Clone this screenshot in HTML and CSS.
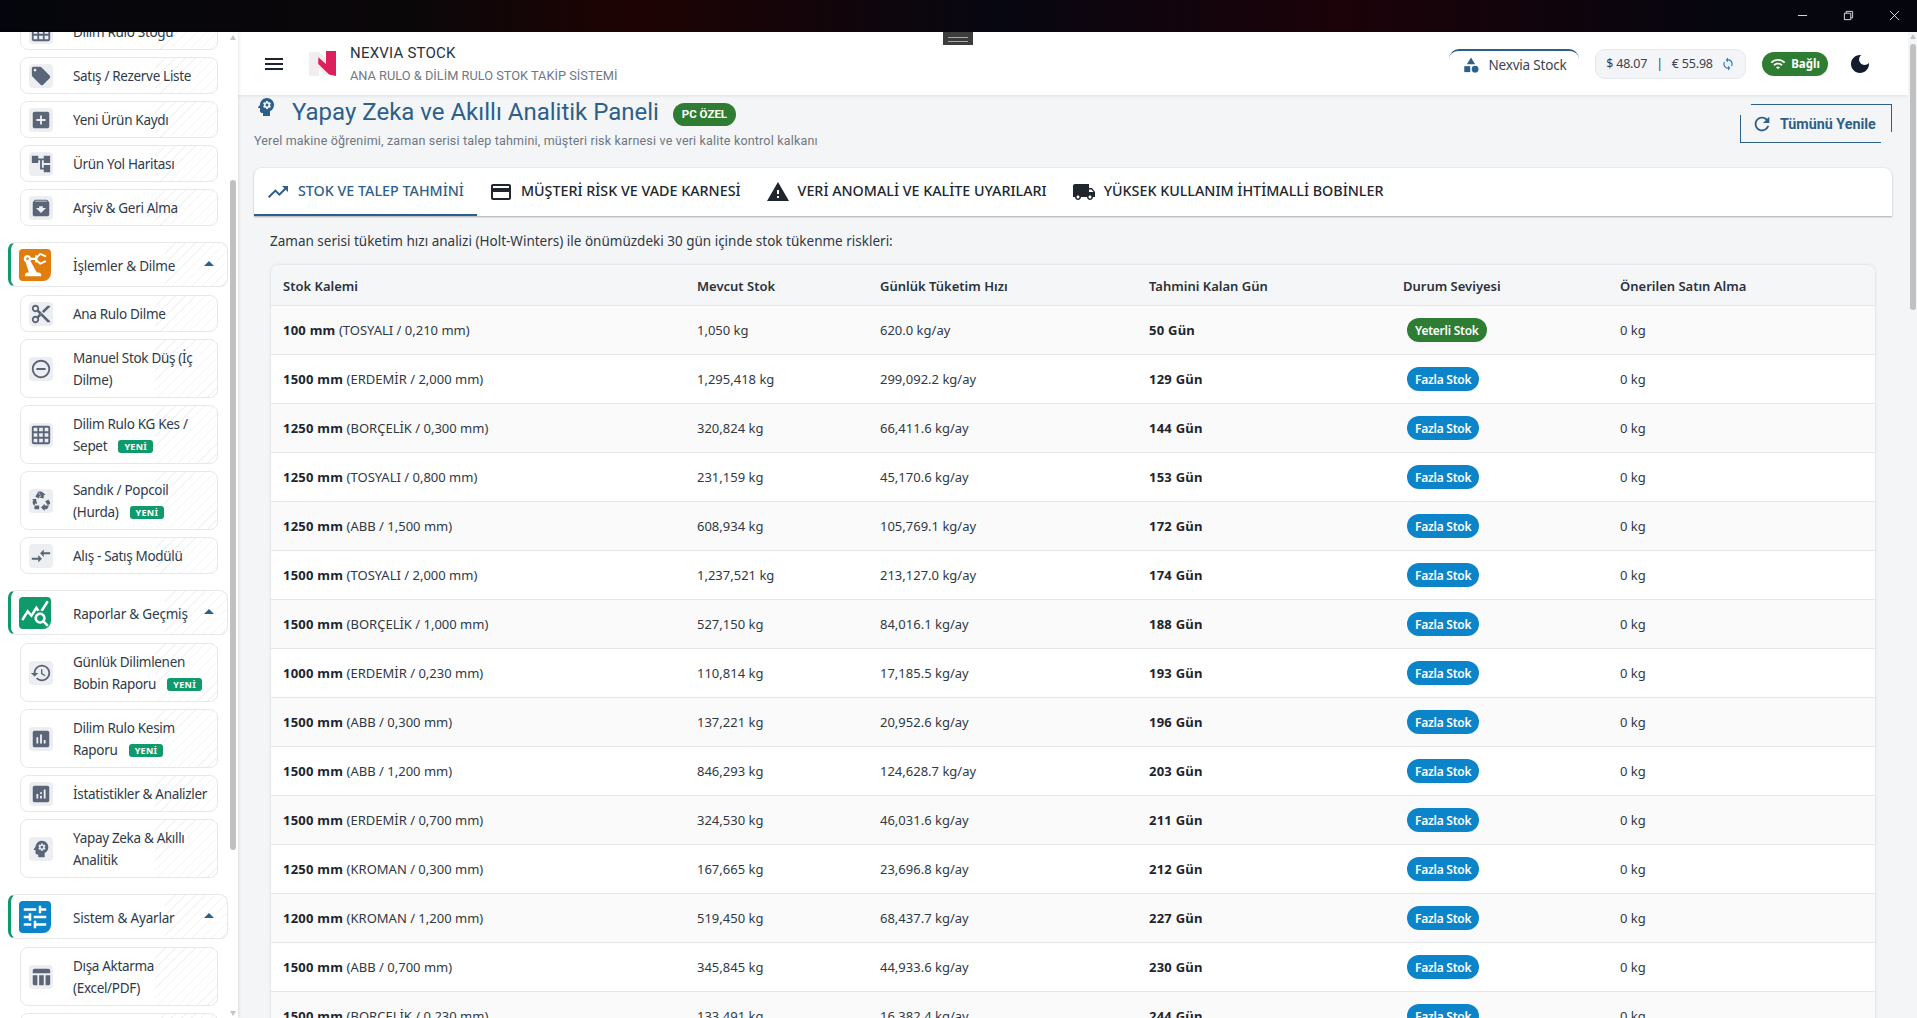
FILE: index.html
```html
<!DOCTYPE html>
<html lang="tr">
<head>
    <meta charset="UTF-8">
    <meta name="viewport" content="width=device-width, initial-scale=1.0">
    <title>Nexvia Stock</title>
    <link rel="stylesheet" href="styles.css">
</head>
<body>
    <svg class="sprite" xmlns="http://www.w3.org/2000/svg">
        <symbol id="i-grid" viewBox="0 0 24 24"><path d="M20 2H4c-1.1 0-2 .9-2 2v16c0 1.1.9 2 2 2h16c1.1 0 2-.9 2-2V4c0-1.1-.9-2-2-2zM8 20H4v-4h4v4zm0-6H4v-4h4v4zm0-6H4V4h4v4zm6 12h-4v-4h4v4zm0-6h-4v-4h4v4zm0-6h-4V4h4v4zm6 12h-4v-4h4v4zm0-6h-4v-4h4v4zm0-6h-4V4h4v4z"/></symbol>
        <symbol id="i-tag" viewBox="0 0 24 24"><path d="M21.41 11.58l-9-9C12.05 2.22 11.55 2 11 2H4c-1.1 0-2 .9-2 2v7c0 .55.22 1.05.59 1.42l9 9c.36.36.86.58 1.41.58.55 0 1.05-.22 1.41-.59l7-7c.37-.36.59-.86.59-1.41 0-.55-.23-1.06-.59-1.42zM5.5 7C4.67 7 4 6.33 4 5.5S4.67 4 5.5 4 7 4.67 7 5.5 6.33 7 5.5 7z"/></symbol>
        <symbol id="i-add" viewBox="0 0 24 24"><path d="M19 3H5c-1.11 0-2 .9-2 2v14c0 1.1.89 2 2 2h14c1.1 0 2-.9 2-2V5c0-1.1-.9-2-2-2zm-2 10h-4v4h-2v-4H7v-2h4V7h2v4h4v2z"/></symbol>
        <symbol id="i-tree" viewBox="0 0 24 24"><path d="M22 11V3h-7v3H9V3H2v8h7V8h2v10h4v3h7v-8h-7v3h-2V8h2v3z"/></symbol>
        <symbol id="i-archive" viewBox="0 0 24 24"><path d="M20.54 5.23l-1.39-1.68C18.88 3.21 18.47 3 18 3H6c-.47 0-.88.21-1.16.55L3.46 5.23C3.17 5.57 3 6.02 3 6.5V19c0 1.1.9 2 2 2h14c1.1 0 2-.9 2-2V6.5c0-.48-.17-.93-.46-1.27zM12 17.5L6.5 12H10v-2h4v2h3.5L12 17.5zM5.12 5l.81-1h12l.94 1H5.12z"/></symbol>
        <symbol id="i-cut" viewBox="0 0 24 24"><path d="M9.64 7.64c.23-.5.36-1.05.36-1.64 0-2.21-1.79-4-4-4S2 3.79 2 6s1.79 4 4 4c.59 0 1.14-.13 1.64-.36L10 12l-2.36 2.36C7.14 14.13 6.59 14 6 14c-2.21 0-4 1.79-4 4s1.79 4 4 4 4-1.79 4-4c0-.59-.13-1.14-.36-1.64L12 14l7 7h3v-1L9.64 7.64zM6 8c-1.1 0-2-.89-2-2s.9-2 2-2 2 .89 2 2-.9 2-2 2zm0 12c-1.1 0-2-.89-2-2s.9-2 2-2 2 .89 2 2-.9 2-2 2zm6-7.5c-.28 0-.5-.22-.5-.5s.22-.5.5-.5.5.22.5.5-.22.5-.5.5zM19 3l-6 6 2 2 7-7V3z"/></symbol>
        <symbol id="i-minus" viewBox="0 0 24 24"><path d="M7 11v2h10v-2H7zm5-9C6.48 2 2 6.48 2 12s4.48 10 10 10 10-4.48 10-10S17.52 2 12 2zm0 18c-4.41 0-8-3.59-8-8s3.59-8 8-8 8 3.59 8 8-3.59 8-8 8z"/></symbol>
        <symbol id="i-recycle" viewBox="0 0 24 24"><path d="M5.77 7.15 7.2 4.78l1.03-1.71c.39-.65 1.33-.65 1.72 0l1.48 2.46-1.23 2.06-1 1.62-3.43-2.06zm15.95 5.82-1.6-2.66-3.46 2L18.87 16H20c.76 0 1.45-.43 1.79-1.11.14-.28.21-.58.21-.89 0-.36-.1-.71-.28-1.03zM16 21h1.5c.76 0 1.45-.43 1.79-1.11L20.74 17H16v-2l-4 4 4 4v-2zm-6-4H5.7l-.84 1.41c-.3.5-.32 1.12-.06 1.65.28.57.87.94 1.52.94H10v-4zm-3.88-2.65 1.73 1.04L6.48 9.5 2 10.37l1.73 1.04-.67 1.12c-.33.55-.35 1.24-.07 1.82l1.5 3.1 1.63-3.08zm10.9-9.21L13.6 2.48C13.24 1.87 12.57 1.5 11.86 1.5H8.5l3.32 5.52L10.1 8.06l4.47 1.11 1.09-4.49-1.64.99.01-.01z"/></symbol>
        <symbol id="i-swap" viewBox="0 0 24 24"><path d="M9.01 14H2v2h7.01v3L13 15l-3.99-4v3zm5.98-1v-3H22V8h-7.01V5L11 9l3.99 4z"/></symbol>
        <symbol id="i-history" viewBox="0 0 24 24"><path d="M13 3c-4.97 0-9 4.03-9 9H1l3.89 3.89.07.14L9 12H6c0-3.87 3.13-7 7-7s7 3.13 7 7-3.13 7-7 7c-1.93 0-3.68-.79-4.94-2.06l-1.42 1.42C8.27 19.99 10.51 21 13 21c4.97 0 9-4.03 9-9s-4.03-9-9-9zm-1 5v5l4.28 2.54.72-1.21-3.5-2.08V8H12z"/></symbol>
        <symbol id="i-poll" viewBox="0 0 24 24"><path d="M19 3H5c-1.1 0-2 .9-2 2v14c0 1.1.9 2 2 2h14c1.1 0 2-.9 2-2V5c0-1.1-.9-2-2-2zM9 17H7v-7h2v7zm4 0h-2V7h2v10zm4 0h-2v-4h2v4z"/></symbol>
        <symbol id="i-analytics" viewBox="0 0 24 24"><path d="M19 3H5c-1.1 0-2 .9-2 2v14c0 1.1.9 2 2 2h14c1.1 0 2-.9 2-2V5c0-1.1-.9-2-2-2zM9 17H7v-5h2v5zm4 0h-2v-3h2v3zm0-5h-2v-2h2v2zm4 5h-2V7h2v10z"/></symbol>
        <symbol id="i-brain" viewBox="0 0 24 24"><path d="M13 8.57c-.79 0-1.43.64-1.43 1.43s.64 1.43 1.43 1.43 1.43-.64 1.43-1.43-.64-1.43-1.43-1.43z"/><path d="M13 3C9.25 3 6.2 5.94 6.02 9.64L4.1 12.2c-.25.33-.01.8.4.8H6v3c0 1.1.9 2 2 2h1v3h7v-4.68c2.36-1.12 4-3.53 4-6.32 0-3.87-3.13-7-7-7zm3 7c0 .13-.01.26-.02.39l.83.66c.08.06.1.16.05.25l-.8 1.39c-.05.09-.16.12-.24.09l-.99-.4c-.21.16-.43.29-.67.39L14 13.83c-.01.1-.1.17-.2.17h-1.6c-.1 0-.18-.07-.2-.17l-.15-1.06c-.25-.1-.47-.23-.68-.39l-.99.4c-.09.03-.2 0-.25-.09l-.8-1.39c-.05-.08-.03-.19.05-.25l.84-.66c-.01-.13-.02-.26-.02-.39s.02-.27.04-.39l-.85-.66c-.08-.06-.1-.16-.05-.26l.8-1.38c.05-.09.15-.12.24-.09l1 .4c.2-.15.43-.29.67-.39L12 6.17c.02-.1.1-.17.2-.17h1.6c.1 0 .18.07.2.17l.15 1.06c.24.1.46.23.67.39l1-.4c.09-.03.2 0 .24.09l.8 1.38c.05.09.03.2-.05.26l-.85.66c.03.12.04.25.04.39z"/></symbol>
        <symbol id="i-table" viewBox="0 0 24 24"><path d="M10 10.02h5V21h-5zM17 21h3c1.1 0 2-.9 2-2v-9h-5v11zm3-18H5c-1.1 0-2 .9-2 2v3h19V5c0-1.1-.9-2-2-2zM3 19c0 1.1.9 2 2 2h3V10H3v9z"/></symbol>
        <symbol id="i-robot" viewBox="0 0 24 24"><path d="M19.93 8.35l-3.6 1.68L14 7.7V6.3l2.33-2.33 3.6 1.68c.38.18.82.01 1-.36.18-.38.01-.82-.36-1L16.65 2.6c-.38-.18-.83-.1-1.13.2l-1.74 1.74c-.18-.18-.43-.29-.71-.29-.55 0-1 .45-1 1v1H8.82C8.34 4.65 7.26 4 6 4 4.34 4 3 5.34 3 7c0 1.1.6 2.05 1.48 2.58L7.08 18H6c-1.1 0-2 .9-2 2v1h13v-1c0-1.1-.9-2-2-2h-1.62L8.41 8.77c.17-.24.31-.49.41-.77H12v1c0 .55.45 1 1 1 .28 0 .53-.11.71-.29l1.74 1.74c.3.3.75.38 1.13.2l3.92-1.83c.38-.18.54-.62.36-1-.18-.37-.62-.54-.93-.47zM6 8c-.55 0-1-.45-1-1s.45-1 1-1 1 .45 1 1-.45 1-1 1z"/></symbol>
        <symbol id="i-query" viewBox="0 0 24 24"><path d="M19.88 18.47c.44-.7.7-1.51.7-2.39 0-2.49-2.01-4.5-4.5-4.5s-4.5 2.01-4.5 4.5 2.01 4.5 4.49 4.5c.88 0 1.7-.26 2.39-.7L21.58 23 23 21.58l-3.12-3.11zm-3.8.11c-1.38 0-2.5-1.12-2.5-2.5s1.12-2.5 2.5-2.5 2.5 1.12 2.5 2.5-1.12 2.5-2.5 2.5zm-.36-8.5c-.74.02-1.45.18-2.1.45l-.55-.83-3.8 6.18-3.01-3.52-3.63 5.81L1 17l5-8 3 3.5L13 6l2.72 4.08zm2.59.5c-.64-.28-1.33-.45-2.05-.49L21.38 2 23 3.18l-4.69 7.4z"/></symbol>
        <symbol id="i-tune" viewBox="0 0 24 24"><path d="M3 17v2h6v-2H3zM3 5v2h10V5H3zm10 16v-2h8v-2h-8v-2h-2v6h2zM7 9v2H3v2h4v2h2V9H7zm14 4v-2H11v2h10zm-6-4h2V7h4V5h-4V3h-2v6z"/></symbol>
        <symbol id="i-trend" viewBox="0 0 24 24"><path d="M16 6l2.29 2.29-4.88 4.88-4-4L2 16.59 3.41 18l6-6 4 4 6.3-6.29L22 12V6z"/></symbol>
        <symbol id="i-card" viewBox="0 0 24 24"><path d="M20 4H4c-1.11 0-1.99.89-1.99 2L2 18c0 1.11.89 2 2 2h16c1.11 0 2-.89 2-2V6c0-1.11-.89-2-2-2zm0 14H4v-6h16v6zm0-10H4V6h16v2z"/></symbol>
        <symbol id="i-warn" viewBox="0 0 24 24"><path d="M1 21h22L12 2 1 21zm12-3h-2v-2h2v2zm0-4h-2v-4h2v4z"/></symbol>
        <symbol id="i-truck" viewBox="0 0 24 24"><path d="M20 8h-3V4H3c-1.1 0-2 .9-2 2v11h2c0 1.66 1.34 3 3 3s3-1.34 3-3h6c0 1.66 1.34 3 3 3s3-1.34 3-3h2v-5l-3-4zM6 18.5c-.83 0-1.5-.67-1.5-1.5s.67-1.5 1.5-1.5 1.5.67 1.5 1.5-.67 1.5-1.5 1.5zm13.5-9l1.96 2.5H17V9.5h2.5zm-1.5 9c-.83 0-1.5-.67-1.5-1.5s.67-1.5 1.5-1.5 1.5.67 1.5 1.5-.67 1.5-1.5 1.5z"/></symbol>
        <symbol id="i-menu" viewBox="0 0 24 24"><path d="M3 18h18v-2H3v2zm0-5h18v-2H3v2zm0-7v2h18V6H3z"/></symbol>
        <symbol id="i-category" viewBox="0 0 24 24"><path d="M12 2l-5.500 9h11z"/><circle cx="17.500" cy="17.500" r="4.500"/><path d="M3 13.500h8v8H3z"/></symbol>
        <symbol id="i-sync" viewBox="0 0 24 24"><path d="M12 4V1L8 5l4 4V6c3.31 0 6 2.69 6 6 0 1.01-.25 1.97-.7 2.8l1.46 1.46C19.54 15.03 20 13.57 20 12c0-4.42-3.58-8-8-8zm0 14c-3.31 0-6-2.69-6-6 0-1.01.25-1.97.7-2.8L5.24 7.74C4.46 8.97 4 10.43 4 12c0 4.42 3.58 8 8 8v3l4-4-4-4v3z"/></symbol>
        <symbol id="i-wifi" viewBox="0 0 24 24"><path d="M1 9l2 2c4.97-4.97 13.03-4.97 18 0l2-2C16.93 2.93 7.08 2.93 1 9zm8 8l3 3 3-3c-1.65-1.66-4.34-1.66-6 0zm-4-4l2 2c2.76-2.76 7.24-2.76 10 0l2-2C15.14 9.14 8.87 9.14 5 13z"/></symbol>
        <symbol id="i-moon" viewBox="0 0 24 24"><path d="M12 3c-4.97 0-9 4.03-9 9s4.03 9 9 9 9-4.03 9-9c0-.46-.04-.92-.1-1.36-.98 1.37-2.58 2.26-4.4 2.26-2.98 0-5.4-2.42-5.4-5.4 0-1.81.89-3.42 2.26-4.4-.44-.06-.9-.1-1.36-.1z"/></symbol>
        <symbol id="i-refresh" viewBox="0 0 24 24"><path d="M17.65 6.35C16.2 4.9 14.21 4 12 4c-4.42 0-7.99 3.58-7.99 8s3.57 8 7.99 8c3.73 0 6.84-2.55 7.73-6h-2.08c-.82 2.33-3.04 4-5.65 4-3.31 0-6-2.69-6-6s2.69-6 6-6c1.66 0 3.14.69 4.22 1.78L13 11h7V4l-2.35 2.35z"/></symbol>
    </svg>

    <div class="titlebar">
        <div class="grip"></div>
        <div class="win-controls">
            <svg class="win-btn" viewBox="0 0 12 12"><path d="M1 6h10"/></svg>
            <svg class="win-btn" viewBox="0 0 12 12"><path d="M1.500 3.500h7v7h-7zM3.500 3.500V1.500h7v7h-2"/></svg>
            <svg class="win-btn" viewBox="0 0 12 12"><path d="M1 1l10 10M11 1L1 11"/></svg>
        </div>
    </div>

    <div class="app">
        <aside class="sidebar">
            <nav class="side-list">
                <a class="side-card"><span class="side-icon"><svg><use href="#i-grid"/></svg></span><span class="side-text">Dilim Rulo Stoğu</span></a>
                <a class="side-card"><span class="side-icon"><svg><use href="#i-tag"/></svg></span><span class="side-text">Satış / Rezerve Liste</span></a>
                <a class="side-card"><span class="side-icon"><svg><use href="#i-add"/></svg></span><span class="side-text">Yeni Ürün Kaydı</span></a>
                <a class="side-card"><span class="side-icon"><svg><use href="#i-tree"/></svg></span><span class="side-text">Ürün Yol Haritası</span></a>
                <a class="side-card"><span class="side-icon"><svg><use href="#i-archive"/></svg></span><span class="side-text">Arşiv &amp; Geri Alma</span></a>

                <a class="side-head"><span class="head-icon orange"><svg><use href="#i-robot"/></svg></span><span class="head-text">İşlemler &amp; Dilme</span><i class="caret"></i></a>
                <a class="side-card"><span class="side-icon"><svg><use href="#i-cut"/></svg></span><span class="side-text">Ana Rulo Dilme</span></a>
                <a class="side-card"><span class="side-icon"><svg><use href="#i-minus"/></svg></span><span class="side-text">Manuel Stok Düş (İç Dilme)</span></a>
                <a class="side-card"><span class="side-icon"><svg><use href="#i-grid"/></svg></span><span class="side-text">Dilim Rulo KG Kes / Sepet <b class="new">YENİ</b></span></a>
                <a class="side-card"><span class="side-icon"><svg><use href="#i-recycle"/></svg></span><span class="side-text">Sandık / Popcoil (Hurda) <b class="new">YENİ</b></span></a>
                <a class="side-card"><span class="side-icon"><svg><use href="#i-swap"/></svg></span><span class="side-text">Alış - Satış Modülü</span></a>

                <a class="side-head"><span class="head-icon green"><svg><use href="#i-query"/></svg></span><span class="head-text">Raporlar &amp; Geçmiş</span><i class="caret"></i></a>
                <a class="side-card"><span class="side-icon"><svg><use href="#i-history"/></svg></span><span class="side-text">Günlük Dilimlenen Bobin Raporu <b class="new">YENİ</b></span></a>
                <a class="side-card"><span class="side-icon"><svg><use href="#i-poll"/></svg></span><span class="side-text">Dilim Rulo Kesim Raporu <b class="new">YENİ</b></span></a>
                <a class="side-card"><span class="side-icon"><svg><use href="#i-analytics"/></svg></span><span class="side-text">İstatistikler &amp; Analizler</span></a>
                <a class="side-card"><span class="side-icon"><svg><use href="#i-brain"/></svg></span><span class="side-text">Yapay Zeka &amp; Akıllı Analitik</span></a>

                <a class="side-head"><span class="head-icon blue"><svg><use href="#i-tune"/></svg></span><span class="head-text">Sistem &amp; Ayarlar</span><i class="caret"></i></a>
                <a class="side-card"><span class="side-icon"><svg><use href="#i-table"/></svg></span><span class="side-text">Dışa Aktarma (Excel/PDF)</span></a>
                <a class="side-card"></a>
            </nav>
            <div class="side-scrollbar">
                <i class="arrow-up"></i>
                <div class="side-thumb"></div>
                <i class="arrow-down"></i>
            </div>
        </aside>

        <div class="main-col">
            <header class="topbar">
                <svg class="menu-icon"><use href="#i-menu"/></svg>
                <svg class="logo" viewBox="0 0 28 26">
                    <path class="logo-back" d="M0 1h10l8 7v17l-8-7v7H0z"/>
                    <path class="logo-mark" d="M9.300 6.300L17 13V0h10v25l-7-1.500L9.300 13z"/>
                </svg>
                <div class="brand">
                    <div class="brand-name">NEXVIA STOCK</div>
                    <div class="brand-sub">ANA RULO &amp; DİLİM RULO STOK TAKİP SİSTEMİ</div>
                </div>
                <div class="top-right">
                    <div class="company"><svg><use href="#i-category"/></svg>Nexvia Stock</div>
                    <div class="rates">$ 48.07 <span class="sep">|</span> € 55.98 <svg><use href="#i-sync"/></svg></div>
                    <div class="online"><svg><use href="#i-wifi"/></svg>Bağlı</div>
                    <svg class="moon"><use href="#i-moon"/></svg>
                </div>
            </header>

            <main class="content">
                <div class="page-head">
                    <div>
                        <div class="page-title">
                            <svg><use href="#i-brain"/></svg>
                            <h1>Yapay Zeka ve Akıllı Analitik Paneli</h1>
                            <span class="pc-badge">PC ÖZEL</span>
                        </div>
                        <p class="page-sub">Yerel makine öğrenimi, zaman serisi talep tahmini, müşteri risk karnesi ve veri kalite kontrol kalkanı</p>
                    </div>
                    <button class="refresh-btn"><svg><use href="#i-refresh"/></svg>Tümünü Yenile</button>
                </div>

                <div class="tabs">
                    <a class="tab active"><svg><use href="#i-trend"/></svg>STOK VE TALEP TAHMİNİ</a>
                    <a class="tab"><svg><use href="#i-card"/></svg>MÜŞTERİ RİSK VE VADE KARNESİ</a>
                    <a class="tab"><svg><use href="#i-warn"/></svg>VERİ ANOMALİ VE KALİTE UYARILARI</a>
                    <a class="tab"><svg><use href="#i-truck"/></svg>YÜKSEK KULLANIM İHTİMALLİ BOBİNLER</a>
                </div>

                <p class="panel-note">Zaman serisi tüketim hızı analizi (Holt-Winters) ile önümüzdeki 30 gün içinde stok tükenme riskleri:</p>

                <div class="table-card">
                    <table class="stock-table">
                        <colgroup>
                            <col class="c1"><col class="c2"><col class="c3"><col class="c4"><col class="c5"><col>
                        </colgroup>
                        <thead>
                            <tr><th>Stok Kalemi</th><th>Mevcut Stok</th><th>Günlük Tüketim Hızı</th><th>Tahmini Kalan Gün</th><th>Durum Seviyesi</th><th>Önerilen Satın Alma</th></tr>
                        </thead>
                        <tbody>
                            <tr><td><b>100 mm</b> (TOSYALI / 0,210 mm)</td><td>1,050 kg</td><td>620.0 kg/ay</td><td><b>50 Gün</b></td><td><span class="pill ok">Yeterli Stok</span></td><td>0 kg</td></tr>
                            <tr><td><b>1500 mm</b> (ERDEMİR / 2,000 mm)</td><td>1,295,418 kg</td><td>299,092.2 kg/ay</td><td><b>129 Gün</b></td><td><span class="pill">Fazla Stok</span></td><td>0 kg</td></tr>
                            <tr><td><b>1250 mm</b> (BORÇELİK / 0,300 mm)</td><td>320,824 kg</td><td>66,411.6 kg/ay</td><td><b>144 Gün</b></td><td><span class="pill">Fazla Stok</span></td><td>0 kg</td></tr>
                            <tr><td><b>1250 mm</b> (TOSYALI / 0,800 mm)</td><td>231,159 kg</td><td>45,170.6 kg/ay</td><td><b>153 Gün</b></td><td><span class="pill">Fazla Stok</span></td><td>0 kg</td></tr>
                            <tr><td><b>1250 mm</b> (ABB / 1,500 mm)</td><td>608,934 kg</td><td>105,769.1 kg/ay</td><td><b>172 Gün</b></td><td><span class="pill">Fazla Stok</span></td><td>0 kg</td></tr>
                            <tr><td><b>1500 mm</b> (TOSYALI / 2,000 mm)</td><td>1,237,521 kg</td><td>213,127.0 kg/ay</td><td><b>174 Gün</b></td><td><span class="pill">Fazla Stok</span></td><td>0 kg</td></tr>
                            <tr><td><b>1500 mm</b> (BORÇELİK / 1,000 mm)</td><td>527,150 kg</td><td>84,016.1 kg/ay</td><td><b>188 Gün</b></td><td><span class="pill">Fazla Stok</span></td><td>0 kg</td></tr>
                            <tr><td><b>1000 mm</b> (ERDEMİR / 0,230 mm)</td><td>110,814 kg</td><td>17,185.5 kg/ay</td><td><b>193 Gün</b></td><td><span class="pill">Fazla Stok</span></td><td>0 kg</td></tr>
                            <tr><td><b>1500 mm</b> (ABB / 0,300 mm)</td><td>137,221 kg</td><td>20,952.6 kg/ay</td><td><b>196 Gün</b></td><td><span class="pill">Fazla Stok</span></td><td>0 kg</td></tr>
                            <tr><td><b>1500 mm</b> (ABB / 1,200 mm)</td><td>846,293 kg</td><td>124,628.7 kg/ay</td><td><b>203 Gün</b></td><td><span class="pill">Fazla Stok</span></td><td>0 kg</td></tr>
                            <tr><td><b>1500 mm</b> (ERDEMİR / 0,700 mm)</td><td>324,530 kg</td><td>46,031.6 kg/ay</td><td><b>211 Gün</b></td><td><span class="pill">Fazla Stok</span></td><td>0 kg</td></tr>
                            <tr><td><b>1250 mm</b> (KROMAN / 0,300 mm)</td><td>167,665 kg</td><td>23,696.8 kg/ay</td><td><b>212 Gün</b></td><td><span class="pill">Fazla Stok</span></td><td>0 kg</td></tr>
                            <tr><td><b>1200 mm</b> (KROMAN / 1,200 mm)</td><td>519,450 kg</td><td>68,437.7 kg/ay</td><td><b>227 Gün</b></td><td><span class="pill">Fazla Stok</span></td><td>0 kg</td></tr>
                            <tr><td><b>1500 mm</b> (ABB / 0,700 mm)</td><td>345,845 kg</td><td>44,933.6 kg/ay</td><td><b>230 Gün</b></td><td><span class="pill">Fazla Stok</span></td><td>0 kg</td></tr>
                            <tr><td><b>1500 mm</b> (BORÇELİK / 0,230 mm)</td><td>133,491 kg</td><td>16,382.4 kg/ay</td><td><b>244 Gün</b></td><td><span class="pill">Fazla Stok</span></td><td>0 kg</td></tr>
                        </tbody>
                    </table>
                </div>
            </main>
        </div>

        <div class="page-scrollbar">
            <i class="arrow-up"></i>
            <div class="page-thumb"></div>
        </div>
    </div>
</body>
</html>
```

FILE: styles.css
```css
* {
    box-sizing: border-box;
}

html, body {
    height: 100%;
}

body {
    margin: 0;
    overflow: hidden;
    font-family: "Noto Sans", "Open Sans", sans-serif;
    color: #27313f;
    background: #fff;
}

.sprite {
    display: none;
}

svg {
    fill: currentColor;
}

/* window title bar */
.titlebar {
    position: relative;
    height: 32px;
    background: linear-gradient(90deg, #05060d 0%, #0b0709 22%, #1e0303 33%, #070711 52%, #1c0209 70%, #06060f 90%, #05060d 100%);
}

.grip {
    position: absolute;
    left: 943px;
    top: 32px;
    width: 30px;
    height: 13px;
    background: #3c3c3c;
    z-index: 5;
}

.grip::after {
    content: "";
    position: absolute;
    left: 5px;
    right: 5px;
    top: 5px;
    height: 3px;
    border-top: 1px solid #a8a8a8;
    border-bottom: 1px solid #a8a8a8;
}

.win-controls {
    position: absolute;
    right: 17px;
    top: 10px;
    display: flex;
    gap: 35px;
}

.win-btn {
    width: 11px;
    height: 11px;
    fill: none;
    stroke: #e8e8e8;
    stroke-width: 1;
}

.app {
    display: flex;
    height: 986px;
}

/* sidebar */
.sidebar {
    position: relative;
    flex: 0 0 238px;
    background: #fff;
    overflow: hidden;
    box-shadow: 1px 0 3px rgba(0, 0, 0, 0.1);
    z-index: 2;
}

.side-list {
    display: flex;
    flex-direction: column;
    gap: 7px;
    margin-top: -19px;
    padding-left: 20px;
    width: 218px;
    font-size: 13.5px;
    letter-spacing: -0.32px;
    line-height: 22px;
    color: #2e3a4a;
}

.side-card {
    position: relative;
    display: flex;
    align-items: center;
    gap: 20px;
    width: 198px;
    flex: none;
    min-height: 37px;
    padding: 0 8px;
    border: 1px solid #e6e8eb;
    border-radius: 8px;
    background: #fff;
    overflow: hidden;
}

.side-text {
    padding: 6.5px 0;
}

.side-card::after, .side-head::after {
    content: "";
    position: absolute;
    right: 0;
    top: 0;
    bottom: 0;
    width: 62px;
    background: repeating-linear-gradient(135deg, rgba(120, 130, 145, 0.09) 0 1px, transparent 1px 7px);
    pointer-events: none;
}

.side-icon {
    flex: none;
    display: flex;
    align-items: center;
    justify-content: center;
    width: 24px;
    height: 24px;
    background: #eceef1;
    border-radius: 4px;
    color: #5a6678;
}

.side-icon svg {
    width: 22px;
    height: 22px;
}

.new {
    display: inline-block;
    margin-left: 8px;
    padding: 0 6px;
    height: 13px;
    line-height: 13px;
    border-radius: 3px;
    background: #0f9a6c;
    color: #fff;
    font-size: 9px;
    font-weight: 700;
    letter-spacing: 0.3px;
    vertical-align: 1px;
}

.side-head {
    position: relative;
    display: flex;
    align-items: center;
    gap: 22px;
    flex: none;
    width: 220px;
    height: 45px;
    margin: 9px 0 1px -12px;
    padding-left: 8px;
    border: 1px solid #e6e8eb;
    border-left: 3px solid #0f9a6c;
    border-radius: 8px;
    background: #fff;
    overflow: hidden;
}

.head-text {
    padding-top: 2px;
    letter-spacing: -0.2px;
}

.head-icon {
    flex: none;
    display: flex;
    align-items: center;
    justify-content: center;
    width: 32px;
    height: 32px;
    border-radius: 4px 4px 8px 4px;
    color: #fff;
}

.head-icon svg {
    width: 30px;
    height: 30px;
}

.orange {
    background: #e17d0c;
}

.green {
    background: #0f9a6c;
}

.blue {
    background: #0b84c9;
}

.caret {
    position: absolute;
    right: 13px;
    top: 18px;
    width: 0;
    height: 0;
    border-left: 5px solid transparent;
    border-right: 5px solid transparent;
    border-bottom: 5px solid #2d5f8b;
}

.side-scrollbar {
    position: absolute;
    left: 230px;
    top: 0;
    bottom: 0;
    width: 6px;
}

.side-thumb {
    position: absolute;
    left: 0;
    top: 148px;
    width: 6px;
    height: 670px;
    background: #c1c1c1;
    border-radius: 3px;
}

.arrow-up, .arrow-down {
    position: absolute;
    left: 0;
    width: 0;
    height: 0;
    border-left: 3px solid transparent;
    border-right: 3px solid transparent;
}

.arrow-up {
    top: 3px;
    border-bottom: 5px solid #c4c4c4;
}

.arrow-down {
    bottom: 2px;
    border-top: 5px solid #c4c4c4;
}

/* top bar */
.main-col {
    flex: 1;
    min-width: 0;
    display: flex;
    flex-direction: column;
    background: #f3f5f7;
}

.topbar {
    flex: none;
    display: flex;
    align-items: center;
    height: 64px;
    padding: 0 0 0 24px;
    background: #fff;
    border-bottom: 1px solid #e8eaed;
    box-shadow: 0 1px 2px rgba(0, 0, 0, 0.05);
}

.menu-icon {
    width: 24px;
    height: 24px;
    color: #1c2433;
}

.logo {
    width: 28px;
    height: 26px;
    margin: 0 13px 0 23px;
}

.logo-back {
    fill: #f3eeee;
}

.logo-mark {
    fill: #dd1f5d;
}

.brand {
    font-family: Roboto, sans-serif;
}

.brand-name {
    font-size: 15px;
    letter-spacing: 0.2px;
    line-height: 20px;
    color: #27313f;
}

.brand-sub {
    margin-top: 5px;
    font-size: 12.8px;
    line-height: 16px;
    color: #6f7782;
}

.top-right {
    margin-left: auto;
    display: flex;
    align-items: center;
    padding-right: 36px;
}

.company {
    display: flex;
    align-items: center;
    justify-content: center;
    gap: 9px;
    width: 130px;
    height: 30px;
    border-top: 2px solid #2d5f8b;
    border-radius: 10px 10px 0 0;
    font-size: 13.5px;
    letter-spacing: -0.2px;
    color: #3a4453;
    background: #fff;
}

.company svg {
    width: 18px;
    height: 18px;
    color: #2d5f8b;
}

.rates {
    display: flex;
    align-items: center;
    justify-content: center;
    gap: 6px;
    width: 151px;
    height: 30px;
    margin-left: 16px;
    border: 1px solid #e4e7ec;
    border-radius: 10px;
    background: #f3f5f8;
    font-size: 12.5px;
    letter-spacing: -0.2px;
    color: #3a4453;
    white-space: nowrap;
}

.rates .sep {
    margin: 0 3px;
}

.rates svg {
    width: 14px;
    height: 14px;
    margin-left: 2px;
    color: #2d7cc0;
}

.online {
    display: flex;
    align-items: center;
    justify-content: center;
    gap: 5px;
    width: 66px;
    height: 24px;
    margin-left: 16px;
    border-radius: 12px;
    background: #2e7d32;
    color: #fff;
    font-size: 11.5px;
    font-weight: 700;
}

.online svg {
    width: 16px;
    height: 16px;
}

.moon {
    width: 24px;
    height: 24px;
    margin-left: 20px;
    color: #141b2d;
}

/* page content */
.content {
    flex: 1;
    min-height: 0;
    overflow: hidden;
    padding: 0 16px;
}

.page-head {
    display: flex;
    justify-content: space-between;
    height: 72px;
}

.page-title {
    display: flex;
    align-items: center;
    height: 30px;
    padding-top: 1px;
    color: #2d5f8b;
}

.page-title svg {
    width: 24px;
    height: 24px;
    margin-top: -10px;
    flex: none;
}

.page-title h1 {
    margin: 0 14px;
    font-family: Roboto, sans-serif;
    font-size: 24px;
    font-weight: 400;
}

.pc-badge {
    width: 63px;
    height: 23px;
    margin-top: 6px;
    line-height: 23px;
    text-align: center;
    border-radius: 12px;
    background: #2e7d32;
    color: #fff;
    font-family: Roboto, sans-serif;
    font-size: 11.5px;
    font-weight: 700;
}

.page-sub {
    margin: 7px 0 0;
    font-family: Roboto, sans-serif;
    font-size: 12.5px;
    line-height: 16px;
    letter-spacing: 0.18px;
    color: #6f7782;
}

.refresh-btn {
    position: relative;
    display: flex;
    align-items: center;
    gap: 7px;
    width: 152px;
    height: 39px;
    margin-top: 8px;
    padding: 0 10px;
    border: 1px solid #2d5f8b;
    border-radius: 0;
    background: #f3f5f7;
    color: #2d5f8b;
    font-family: Roboto, sans-serif;
    font-size: 14.3px;
    font-weight: 700;
    white-space: nowrap;
}

.refresh-btn::before, .refresh-btn::after {
    content: "";
    position: absolute;
    width: 11px;
    height: 11px;
    background: #f3f5f7;
}

.refresh-btn::before {
    left: -1px;
    top: -1px;
}

.refresh-btn::after {
    right: -1px;
    bottom: -1px;
}

.refresh-btn svg {
    width: 22px;
    height: 22px;
    flex: none;
}

.tabs {
    display: flex;
    height: 48px;
    background: #fff;
    border-radius: 8px 8px 0 0;
    box-shadow: 0 1px 2px rgba(0, 0, 0, 0.3), 0 -1px 2px rgba(0, 0, 0, 0.04);
}

.tab {
    display: flex;
    align-items: center;
    gap: 8px;
    padding: 0 13px 4px 12px;
    font-size: 14.3px;
    font-weight: 500;
    color: #20262e;
    white-space: nowrap;
}

.tab svg {
    width: 24px;
    height: 24px;
    margin-top: 4px;
    flex: none;
}

.tab.active {
    color: #2d5f8b;
    box-shadow: inset 0 -2px 0 #2d5f8b;
}

.panel-note {
    margin: 0;
    padding: 17px 17px 0 16px;
    height: 49px;
    font-size: 13.5px;
    line-height: 16px;
    color: #303844;
}

.table-card {
    margin: 0 17px;
    background: #fff;
    border-radius: 8px 8px 0 0;
    box-shadow: 0 0 3px rgba(0, 0, 0, 0.15);
    overflow: hidden;
}

.stock-table {
    width: 100%;
    table-layout: fixed;
    border-collapse: collapse;
    font-size: 13px;
    color: #2f3945;
}

.c1 { width: 414px; }
.c2 { width: 183px; }
.c3 { width: 269px; }
.c4 { width: 254px; }
.c5 { width: 217px; }

.stock-table th {
    height: 40px;
    padding: 3px 12px 0;
    text-align: left;
    font-weight: 600;
    background: #f5f6f8;
    color: #2a323c;
    border-bottom: 1px solid #e5e7eb;
}

.stock-table td {
    height: 49px;
    padding: 0 12px;
    border-bottom: 1px solid #e5e7eb;
    white-space: nowrap;
}

.stock-table td b {
    font-weight: 700;
    letter-spacing: 0.25px;
    color: #1d242d;
}

.stock-table tbody tr:nth-child(odd) {
    background: #fafafa;
}

.pill {
    display: inline-block;
    height: 24px;
    line-height: 25px;
    margin-left: 4px;
    padding: 0 8px;
    border-radius: 12px;
    background: #0b84c9;
    color: #fff;
    font-size: 12px;
    letter-spacing: -0.25px;
    font-weight: 600;
}

.pill.ok {
    background: #2e7d32;
}

/* fake page scrollbar, the real one is hidden by the viewport */
.page-scrollbar {
    position: relative;
    flex: 0 0 9px;
    background: #f3f5f7;
}

.page-scrollbar .arrow-up {
    left: 2px;
    top: 2px;
}

.page-thumb {
    position: absolute;
    left: 2px;
    top: 12px;
    width: 6px;
    height: 266px;
    background: #c1c1c1;
    border-radius: 3px;
}
```
